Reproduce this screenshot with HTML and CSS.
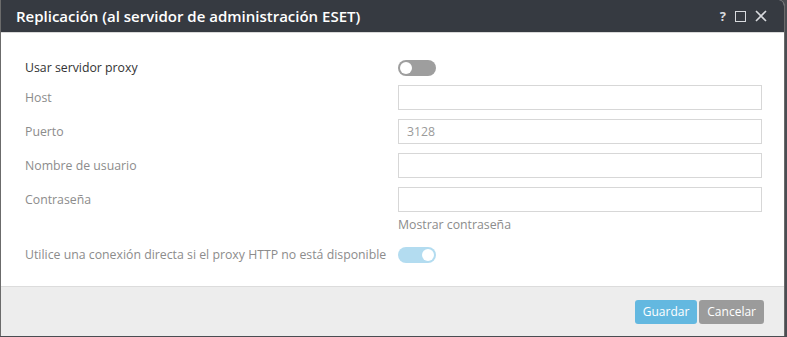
FILE: index.html
```html
<!DOCTYPE html>
<html lang="es">
<head>
    <meta charset="UTF-8">
    <title>Replicación</title>
    <link rel="stylesheet" href="styles.css">
</head>
<body>
    <div class="dialog">
        <div class="dialog-head">
            <span class="title">Replicación (al servidor de administración ESET)</span>
            <span class="head-icons">
                <span class="help">?</span>
                <span class="maxi"></span>
                <svg class="close" width="12" height="12" viewBox="0 0 12 12">
                    <path d="M1 1 L11 11 M11 1 L1 11" stroke="#d8dade" stroke-width="1.6" fill="none"/>
                </svg>
            </span>
        </div>

        <div class="dialog-body">
            <div class="row">
                <label class="lbl active">Usar servidor proxy</label>
                <div class="field"><span class="toggle off"><span class="knob"></span></span></div>
            </div>
            <div class="row">
                <label class="lbl">Host</label>
                <div class="field"><div class="input"></div></div>
            </div>
            <div class="row">
                <label class="lbl">Puerto</label>
                <div class="field"><div class="input">3128</div></div>
            </div>
            <div class="row">
                <label class="lbl">Nombre de usuario</label>
                <div class="field"><div class="input"></div></div>
            </div>
            <div class="row">
                <label class="lbl">Contraseña</label>
                <div class="field"><div class="input"></div></div>
            </div>
            <div class="row show-pass">
                <span class="lbl"></span>
                <div class="field">Mostrar contraseña</div>
            </div>
            <div class="row direct">
                <label class="lbl">Utilice una conexión directa si el proxy HTTP no está disponible</label>
                <div class="field"><span class="toggle on"><span class="knob"></span></span></div>
            </div>
        </div>

        <div class="dialog-foot">
            <button class="btn save">Guardar</button>
            <button class="btn cancel">Cancelar</button>
        </div>
    </div>
</body>
</html>
```

FILE: styles.css
```css
body {
    margin: 0;
    background-color: #4a4d52;
    font-family: 'Open Sans', sans-serif;
    font-size: 12.3px;
    width: 787px;
    height: 337px;
    overflow: hidden;
}
.dialog {
    width: 783px;
    height: 336px;
    background: #fff;
    border-left: 1px solid #6b6b6b;
    border-right: 1px solid #6b6b6b;
    border-radius: 0 6px 0 0;
    overflow: hidden;
    display: flex;
    flex-direction: column;
}
.dialog-head {
    height: 33px;
    background-color: #363a41;
    border-bottom: 1px solid #d9d9d9;
    display: flex;
    align-items: center;
    justify-content: space-between;
    padding: 0 17px 0 15px;
    box-sizing: border-box;
    flex-shrink: 0;
}
.title {
    color: #fff;
    font-size: 15px;
    font-weight: 600;
    margin-top: -1px;
}
.head-icons {
    display: flex;
    align-items: center;
    gap: 9px;
}
.help {
    color: #d8dade;
    font-size: 13px;
    font-weight: 700;
}
.maxi {
    width: 9px;
    height: 9px;
    border: 1.5px solid #d8dade;
}
.dialog-body {
    flex: 1;
    padding: 26px 0 0 24px;
}
.row {
    display: flex;
    align-items: center;
    margin-bottom: 9px;
}
.lbl {
    width: 373px;
    color: #8c8c8c;
    flex-shrink: 0;
}
.lbl.active {
    color: #333;
}
.field {
    width: 364px;
}
.input {
    height: 25px;
    border: 1px solid #d7d7d7;
    box-sizing: border-box;
    padding: 0 8px;
    line-height: 23px;
    color: #9a9a9a;
}
.toggle {
    display: block;
    width: 38px;
    height: 16px;
    border-radius: 8px;
    position: relative;
}
.toggle .knob {
    position: absolute;
    top: 2px;
    width: 12px;
    height: 12px;
    border-radius: 50%;
    background: #fff;
}
.toggle.off {
    background: #9e9e9e;
}
.toggle.off .knob {
    left: 2px;
}
.toggle.on {
    background: #b3dcf0;
}
.toggle.on .knob {
    right: 2px;
}
.show-pass {
    color: #8c8c8c;
    margin-top: -5px;
    margin-bottom: 13px;
}
.dialog-foot {
    height: 49px;
    background-color: #ededed;
    border-top: 1px solid #dcdcdc;
    display: flex;
    justify-content: flex-end;
    align-items: center;
    gap: 2px;
    padding-right: 20px;
    flex-shrink: 0;
}
.btn {
    height: 24px;
    border: none;
    border-radius: 3px;
    color: #fff;
    font-family: 'Open Sans', sans-serif;
    font-size: 12px;
    padding: 0 8px;
}
.btn.save {
    background-color: #63b8e0;
}
.btn.cancel {
    background-color: #9b9b9b;
}
```
